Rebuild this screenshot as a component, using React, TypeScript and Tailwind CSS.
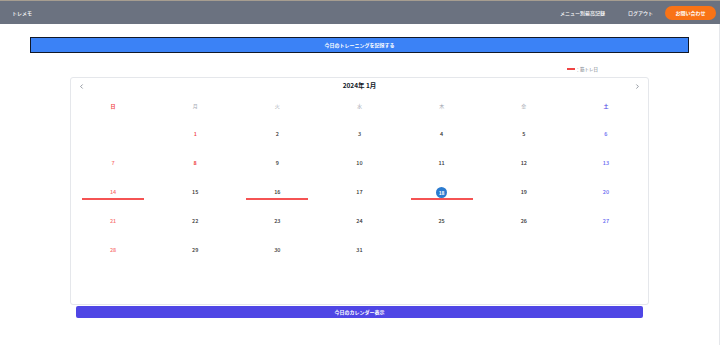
import { ChevronLeft, ChevronRight } from 'lucide-react';

type Day = {
  n: number;
  color: string;
  bold?: boolean;
  mark?: boolean;
  today?: boolean;
};

const weekdays = [
  { label: '日', color: 'text-[#ef4444] font-bold' },
  { label: '月', color: 'text-[#a3a8b1]' },
  { label: '火', color: 'text-[#a3a8b1]' },
  { label: '水', color: 'text-[#a3a8b1]' },
  { label: '木', color: 'text-[#a3a8b1]' },
  { label: '金', color: 'text-[#a3a8b1]' },
  { label: '土', color: 'text-[#4f46e5] font-bold' },
];

const trainingDays = [14, 16, 18];
const holidays = [1, 8];

function buildWeeks(): (Day | null)[][] {
  const cells: (Day | null)[] = [null];
  for (let n = 1; n <= 31; n++) {
    const dow = n % 7; // Jan 1 2024 = Monday
    let color = 'text-[#333333]';
    if (dow === 0) color = 'text-[#f87171]';
    if (dow === 6) color = 'text-[#6366f1]';
    if (holidays.includes(n)) color = 'text-[#ef4444]';
    cells.push({
      n,
      color,
      bold: n === 8,
      mark: trainingDays.includes(n),
      today: n === 18,
    });
  }
  while (cells.length < 42) cells.push(null);
  const weeks: (Day | null)[][] = [];
  for (let i = 0; i < 42; i += 7) weeks.push(cells.slice(i, i + 7));
  return weeks;
}

export default function App() {
  const weeks = buildWeeks();

  return (
    <div className="w-[720px] h-[345px] bg-white overflow-hidden font-['Noto_Sans_CJK_JP','Noto_Sans',sans-serif]">
      {/* Header */}
      <header className="h-[24px] bg-[#6b7280] border-t border-[#a69d90] flex items-center justify-between pl-[12px] pr-[4px] text-white">
        <span className="text-[5px] font-medium">トレメモ</span>
        <nav className="flex items-center">
          <span className="text-[5px] font-medium mr-[23px]">メニュー別最高記録</span>
          <span className="text-[5px] font-medium mr-[12px]">ログアウト</span>
          <button className="h-[14px] w-[51px] rounded-full bg-[#f97316] text-[5px] font-bold text-white flex items-center justify-center">
            お問い合わせ
          </button>
        </nav>
      </header>

      <main className="h-[321px] border-r border-[#e5e7eb] pt-[13px]">
        <button className="ml-[30px] w-[659px] h-[16px] bg-[#3b82f6] border border-[#111827] text-white text-[5px] font-bold flex items-center justify-center">
          今日のトレーニングを記録する
        </button>

        {/* Legend */}
        <div className="mt-[12px] h-[8px] flex items-center justify-end pr-[121px]">
          <span className="block w-[8px] h-[1.5px] bg-[#ef4444] mr-[1px]" />
          <span className="text-[4.5px] text-[#6b7280]">：筋トレ日</span>
        </div>

        {/* Calendar */}
        <div className="mt-[4px] ml-[70px] w-[579px] h-[228px] border border-[#e5e7eb] rounded-[3px] px-[1px]">
          <div className="h-[16px] flex items-center justify-between px-[6px]">
            <ChevronLeft className="w-[7px] h-[7px] text-[#4b5563]" strokeWidth={2} />
            <span className="text-[6.5px] font-bold text-[#111827]">2024年 1月</span>
            <ChevronRight className="w-[7px] h-[7px] text-[#4b5563]" strokeWidth={2} />
          </div>
          <div className="grid grid-cols-7 h-[24px] items-center">
            {weekdays.map((w) => (
              <div key={w.label} className={`text-center text-[5px] ${w.color}`}>
                {w.label}
              </div>
            ))}
          </div>
          <div className="mt-[2px]">
            {weeks.map((week, wi) => (
              <div key={wi} className="grid grid-cols-7 h-[29px]">
                {week.map((d, di) => (
                  <div key={di} className="relative flex items-center justify-center">
                    {d && (
                      <>
                        {d.today ? (
                          <span className="w-[11px] h-[11px] rounded-full bg-[#2b7bcf] text-white text-[5px] font-bold flex items-center justify-center">
                            {d.n}
                          </span>
                        ) : (
                          <span className={`text-[5.5px] ${d.color} ${d.bold ? 'font-bold' : 'font-medium'}`}>{d.n}</span>
                        )}
                        {d.mark && (
                          <span className="absolute left-[10px] right-[10px] top-[20px] h-[2px] bg-[#f55353]" />
                        )}
                      </>
                    )}
                  </div>
                ))}
              </div>
            ))}
          </div>
        </div>

        <button className="mt-[1px] ml-[76px] w-[567px] h-[12px] rounded-[2px] bg-[#4f46e5] text-white text-[5px] font-bold flex items-center justify-center">
          今日のカレンダー表示
        </button>
      </main>
    </div>
  );
}
